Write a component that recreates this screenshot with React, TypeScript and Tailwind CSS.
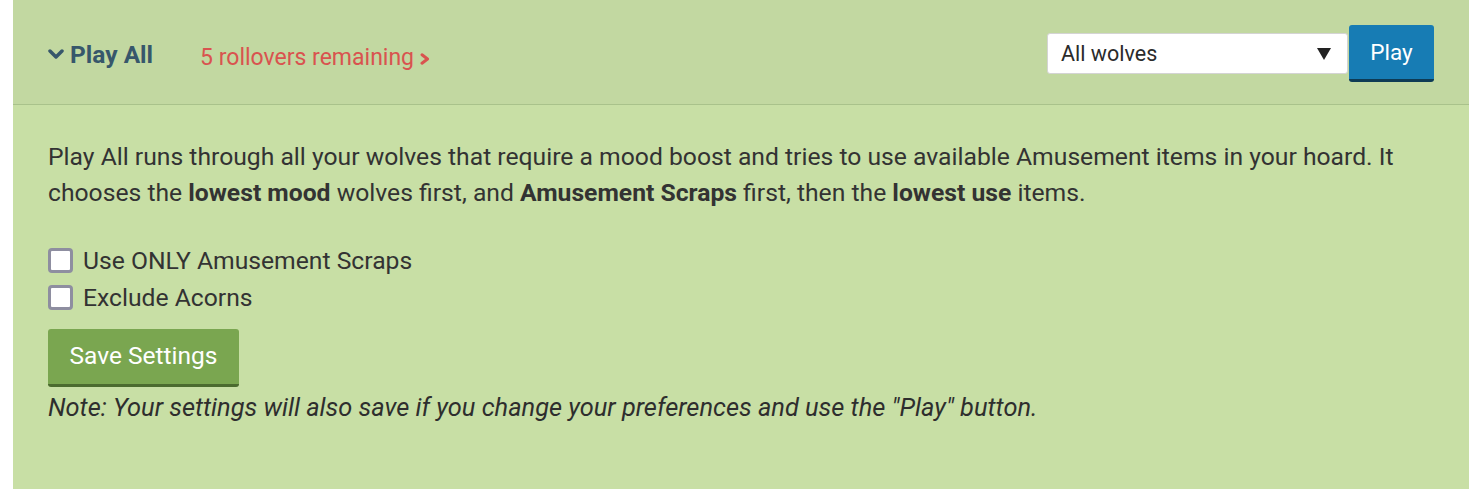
export default function App() {
  return (
    <div className="min-h-[500px] bg-white px-[13px] pb-[11px] font-['Roboto',sans-serif]">
      <div className="bg-[#c8dfa5]">
        {/* Header */}
        <div className="flex h-[105px] items-center justify-between border-b border-[#a9c28b] bg-[#c2d8a1] pl-[35px] pr-[35px] pt-[3px]">
          <div className="flex items-center">
            <button className="mt-[3px] flex items-center gap-[6px] text-[24.5px] font-bold text-[#37576b]">
              <svg width="16" height="10" viewBox="0 0 16 10" className="mb-[2px]">
                <polyline points="2,2 8,8 14,2" fill="none" stroke="currentColor" strokeWidth="3.5" strokeLinecap="round" strokeLinejoin="round" />
              </svg>
              <span>Play All</span>
            </button>
            <a className="ml-[47px] mt-[9px] flex items-center text-[23px] text-[#d9534f]">
              5 rollovers remaining
              <svg width="10" height="12" viewBox="0 0 10 12" className="ml-[6px] mt-[1px]">
                <polyline points="2,1.8 7.5,6 2,10.2" fill="none" stroke="currentColor" strokeWidth="3" strokeLinecap="round" strokeLinejoin="round" />
              </svg>
            </a>
          </div>
          <div className="flex items-center">
            <div className="flex h-[41px] w-[301px] items-center justify-between rounded-[3px] border border-[#d4d4d4] bg-white pl-[13px] pr-[16px] pt-[2px] text-[21.5px] text-[#2b2b2b]">
              <span>All wolves</span>
              <span className="mb-[2px] h-0 w-0 border-x-[7px] border-t-[12px] border-x-transparent border-t-[#222]" />
            </div>
            <button className="ml-[1px] h-[57px] w-[85px] rounded-[3px] border-b-[3px] border-[#0e3b55] bg-[#177cb4] pt-[2px] text-[22.5px] text-white">
              Play
            </button>
          </div>
        </div>

        {/* Body */}
        <div className="px-[35px] pb-[62px] pt-[34px] text-[24.7px] text-[#333]">
          <p className="leading-[36px]">
            Play All runs through all your wolves that require a mood boost and tries to use available Amusement items in your hoard. It
            chooses the <b>lowest mood</b> wolves first, and <b>Amusement Scraps</b> first, then the <b>lowest use</b> items.
          </p>
          <div className="mt-[31px] flex flex-col">
            <label className="flex h-[37px] items-center gap-[10px]">
              <span className="h-[25px] w-[25px] shrink-0 rounded-[4px] border-[3px] border-[#8e8ea0] bg-white" />
              Use ONLY Amusement Scraps
            </label>
            <label className="flex h-[37px] items-center gap-[10px]">
              <span className="h-[25px] w-[25px] shrink-0 rounded-[4px] border-[3px] border-[#8e8ea0] bg-white" />
              Exclude Acorns
            </label>
          </div>
          <button className="mt-[13px] block h-[58px] w-[191px] rounded-[3px] border-b-[3px] border-[#4b6b2f] bg-[#7aa650] text-[24.5px] text-white">
            Save Settings
          </button>
          <p className="text-[25.4px] italic leading-[40px] text-[#2e2e2e]">
            Note: Your settings will also save if you change your preferences and use the "Play" button.
          </p>
        </div>
      </div>
    </div>
  );
}
